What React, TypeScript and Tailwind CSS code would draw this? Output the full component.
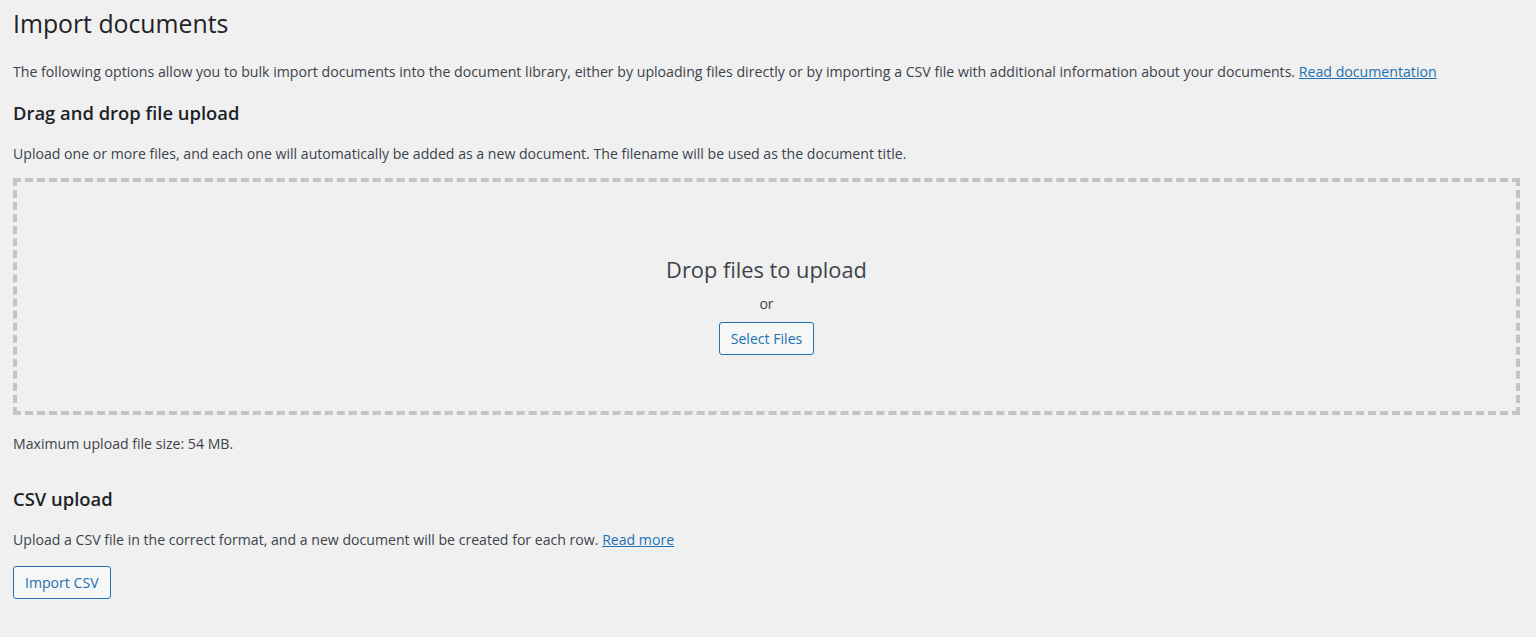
import React from "react";

export default function App() {
  const font = { fontFamily: '"Open Sans", "Noto Sans", sans-serif' };
  return (
    <div className="min-h-[637px] w-full bg-[#f0f0f1] text-[#3c434a] px-[13px] pt-[5px]" style={font}>
      <h1 className="text-[24.8px] leading-[36px] font-normal text-[#1d2327]">Import documents</h1>
      <p className="mt-[20px] text-[14.15px] leading-[22px] whitespace-nowrap">
        The following options allow you to bulk import documents into the document library, either by uploading files directly or by importing a CSV file with additional information about your documents.{" "}
        <a href="#" className="text-[#2271b1] underline">Read documentation</a>
      </p>
      <h2 className="mt-[16px] text-[18.4px] leading-[28px] font-semibold text-[#1d2327]">Drag and drop file upload</h2>
      <p className="mt-[16px] text-[14.1px] leading-[22px]">
        Upload one or more files, and each one will automatically be added as a new document. The filename will be used as the document title.
      </p>
      <div className="mt-[13px] mr-[3px] h-[237px] border-4 border-dashed border-[#c3c4c7] flex flex-col items-center pt-[73px]">
        <div className="text-[21.8px] leading-[30px] text-[#3c434a]">Drop files to upload</div>
        <div className="mt-[8px] text-[14.1px] leading-[22px]">or</div>
        <button className="mt-[7px] h-[33px] px-[11px] rounded-[3px] border border-[#2271b1] bg-[#f6f7f7] text-[#2271b1] text-[14.1px] leading-[20px]">
          Select Files
        </button>
      </div>
      <p className="mt-[18px] text-[14.1px] leading-[22px]">Maximum upload file size: 54 MB.</p>
      <h2 className="mt-[30px] text-[18.4px] leading-[28px] font-semibold text-[#1d2327]">CSV upload</h2>
      <p className="mt-[16px] text-[14.1px] leading-[22px]">
        Upload a CSV file in the correct format, and a new document will be created for each row.{" "}
        <a href="#" className="text-[#2271b1] underline">Read more</a>
      </p>
      <button className="mt-[15px] h-[33px] px-[11px] rounded-[3px] border border-[#2271b1] bg-[#f6f7f7] text-[#2271b1] text-[14.1px] leading-[20px]">
        Import CSV
      </button>
    </div>
  );
}
